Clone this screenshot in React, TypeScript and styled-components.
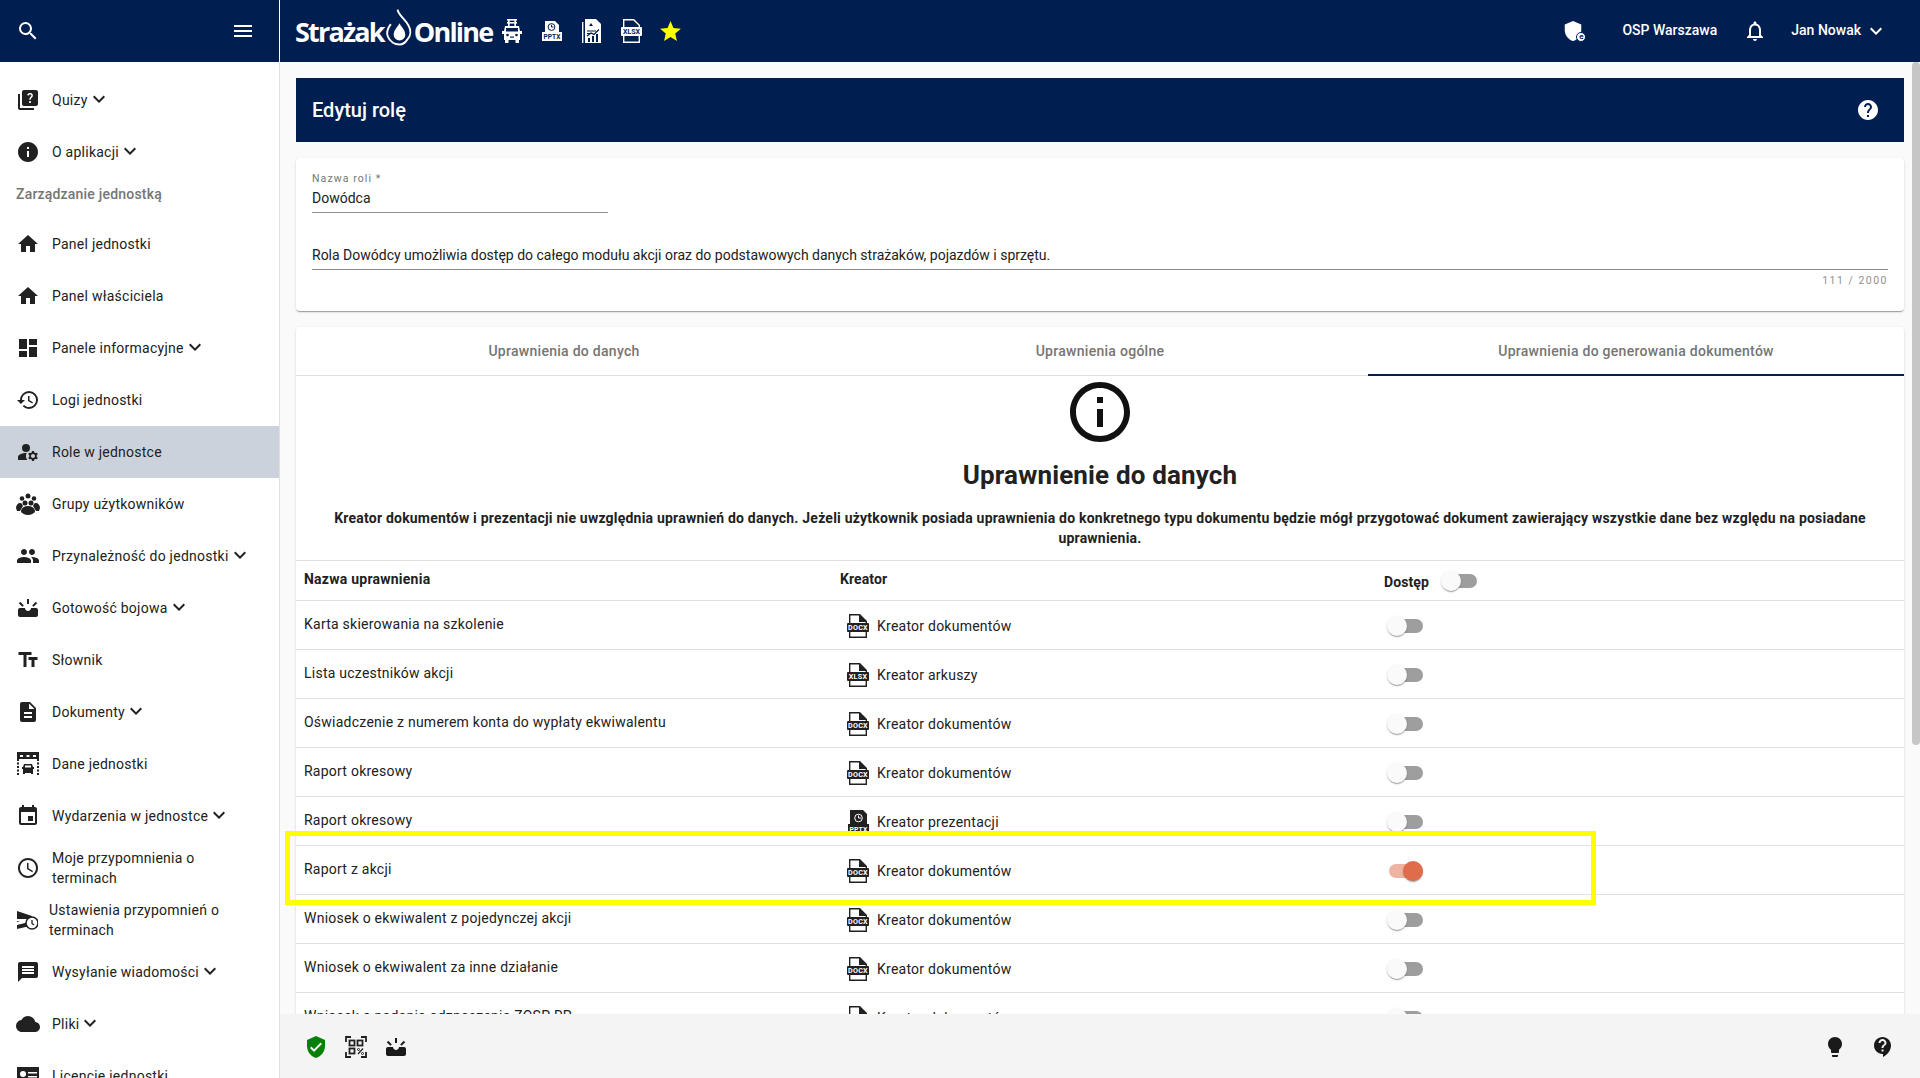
import React from 'react';
import styled, { createGlobalStyle } from 'styled-components';
import {
  MdSearch, MdMenu, MdQuiz, MdInfo, MdInfoOutline, MdHome, MdDashboard, MdHistory, MdManageAccounts,
  MdPeople, MdUpcoming, MdTextFields, MdDescription, MdEvent, MdAccessTime, MdMessage, MdCloud,
  MdKeyboardArrowDown, MdExpandMore, MdHelp, MdContactSupport, MdNotificationsNone, MdStar, MdVerifiedUser,
  MdLightbulb, MdShield,
} from 'react-icons/md';

const NAVY = '#001e50';

const GlobalStyle = createGlobalStyle`
  html, body { margin: 0; padding: 0; height: 100%; overflow: hidden; }
  body { font-family: Roboto, "Liberation Sans", sans-serif; font-size: 14px; color: #212121; background: #fafafa; }
  * { box-sizing: border-box; }
`;

const Page = styled.div`
  display: flex;
  flex-direction: column;
  height: 100vh;
  overflow: hidden;
`;

const TopBar = styled.header`
  flex: 0 0 62px;
  display: flex;
  align-items: center;
  background: ${NAVY};
  color: #fff;
`;

const TopLeft = styled.div`
  flex: 0 0 280px;
  height: 100%;
  display: flex;
  align-items: center;
  justify-content: space-between;
  padding: 0 24px 0 16px;
  border-right: 1px solid #fff;
`;

const Logo = styled.div`
  display: flex;
  align-items: center;
  margin-left: 15px;
  font-family: "Open Sans", sans-serif;
  font-weight: 700;
  font-size: 27px;
  letter-spacing: -1.8px;
  height: 100%;
`;

const TopIcons = styled.div`
  display: flex;
  align-items: center;
  margin-left: 10px;
  gap: 20px;
`;

const Star = styled(MdStar)`
  margin-left: -4px;
`;

const TopRight = styled.div`
  margin-left: auto;
  display: flex;
  align-items: center;
  height: 100%;
  padding-right: 32px;
`;

const ShieldBox = styled.span`
  position: relative;
  display: flex;
  margin-right: 38px;
`;

const ShieldBadge = styled.span`
  position: absolute;
  right: -2px;
  bottom: 0;
  width: 10px;
  height: 10px;
  border-radius: 50%;
  background: #fff;
  border: 1px solid ${NAVY};
  color: ${NAVY};
  font-size: 8px;
  font-weight: 700;
  line-height: 7px;
  text-align: center;
`;

const TopText = styled.span<{ $gap?: number; $lead?: number }>`
  font-weight: 500;
  font-size: 14px;
  margin-top: -2px;
  margin-left: ${(p) => p.$lead ?? 0}px;
  margin-right: ${(p) => p.$gap ?? 0}px;
`;

const Body = styled.div`
  flex: 1;
  min-height: 0;
  display: flex;
`;

const Sidebar = styled.nav`
  flex: 0 0 280px;
  overflow: hidden;
  padding-top: 12px;
  background: #fff;
  border-right: 1px solid #e0e0e0;
`;

const NavItem = styled.div<{ $active?: boolean }>`
  height: 52px;
  display: flex;
  align-items: center;
  padding: 0 16px;
  background: ${(p) => (p.$active ? '#ccd2dc' : 'transparent')};
  color: #212121;
  line-height: 20px;
  svg { flex: none; }
`;

const NavLabel = styled.span<{ $tight?: boolean }>`
  margin-left: ${(p) => (p.$tight ? 11 : 12)}px;
  max-width: 190px;
  letter-spacing: 0.25px;
`;

const Chevron = styled(MdExpandMore)`
  margin-left: -1px;
  margin-top: -3px;
`;

const NavSection = styled.div`
  height: 40px;
  padding: 6px 16px 0;
  line-height: 20px;
  font-weight: 500;
  color: #757575;
  letter-spacing: 0.2px;
`;

const Main = styled.main`
  flex: 1;
  min-width: 0;
  display: flex;
  flex-direction: column;
`;

const ScrollArea = styled.div`
  position: relative;
  flex: 1;
  min-height: 0;
`;

const Scroller = styled.div`
  height: 100%;
  overflow: hidden;
  padding: 16px;
`;

const ScrollTrack = styled.div`
  position: absolute;
  top: 0;
  right: 0;
  bottom: 0;
  width: 8px;
  background: #fafafa;
`;

const ScrollThumb = styled.div`
  height: 683px;
  border-radius: 4px;
  background: #c6c6c6;
`;

const TitleBar = styled.div`
  height: 64px;
  display: flex;
  align-items: center;
  justify-content: space-between;
  padding: 0 24px 0 16px;
  background: ${NAVY};
  color: #fff;
  font-size: 20px;
  font-weight: 500;
`;

const Card = styled.section`
  margin-top: 16px;
  background: #fff;
  border-radius: 4px;
  box-shadow: 0 2px 1px -1px rgba(0,0,0,.2), 0 1px 1px rgba(0,0,0,.14), 0 1px 3px rgba(0,0,0,.12);
`;

const FormCard = styled(Card)`
  height: 153px;
  padding: 15px 16px 0;
`;

const SmallLabel = styled.div`
  font-size: 10.5px;
  line-height: 12px;
  letter-spacing: 1.1px;
  color: #757575;
`;

const NameField = styled.div`
  width: 296px;
  height: 28px;
  padding-top: 3px;
  line-height: 20px;
  border-bottom: 1px solid #8c8c8c;
`;

const DescField = styled.div`
  margin-top: 27px;
  height: 30px;
  padding-top: 5px;
  line-height: 20px;
  border-bottom: 1px solid #8c8c8c;
`;

const Counter = styled.div`
  margin-top: 4px;
  text-align: right;
  font-size: 10.5px;
  line-height: 13px;
  letter-spacing: 1.5px;
  color: #8f8f8f;
`;

const TabsCard = styled(Card)`
  min-height: 1000px;
`;

const TabRow = styled.div`
  display: flex;
  height: 49px;
  border-bottom: 1px solid #e0e0e0;
`;

const Tab = styled.div<{ $active?: boolean }>`
  flex: 1;
  display: flex;
  align-items: center;
  justify-content: center;
  font-weight: 500;
  color: #757575;
  letter-spacing: 0.28px;
  margin-bottom: -1px;
  border-bottom: 2px solid ${(p) => (p.$active ? NAVY : 'transparent')};
`;

const Notice = styled.div`
  display: flex;
  flex-direction: column;
  align-items: center;
  padding: 0 16px 12px;
  text-align: center;
`;

const NoticeTitle = styled.h2`
  margin: 11px 0 0;
  font-size: 26px;
  line-height: 32px;
  font-weight: 700;
  letter-spacing: 0.15px;
  color: #212121;
`;

const NoticeText = styled.p`
  margin: 17px 0 0;
  line-height: 20px;
  font-weight: 700;
  letter-spacing: 0.21px;
`;

const TableRow = styled.div<{ $head?: boolean }>`
  position: relative;
  display: grid;
  grid-template-columns: 536px 544px 1fr;
  align-items: center;
  height: ${(p) => (p.$head ? 41 : 49)}px;
  padding-left: 8px;
  border-top: ${(p) => (p.$head ? '1px solid #e0e0e0' : 'none')};
  border-bottom: 1px solid #e0e0e0;
  font-weight: ${(p) => (p.$head ? 700 : 400)};
`;

const NameCell = styled.div`
  letter-spacing: 0.24px;
  margin-top: -3px;
`;

const CreatorCell = styled.div`
  display: flex;
  align-items: center;
  letter-spacing: 0.24px;
  padding-left: 6px;
  padding-top: 1px;
`;

const CreatorHead = styled.div`
  letter-spacing: 0.1px;
  margin-top: -3px;
`;

const CreatorText = styled.span`
  margin-left: 7px;
`;

const AccessCell = styled.div`
  display: flex;
  align-items: center;
  padding: 1px 0 0 3px;
`;

const AccessHead = styled.div`
  display: flex;
  align-items: center;
  gap: 12px;
  letter-spacing: 0.1px;
`;

const AccessLabel = styled.span`
  margin-top: 3px;
`;

const SwitchBox = styled.span<{ $on?: boolean }>`
  position: relative;
  display: inline-block;
  width: 36px;
  height: 20px;
  flex: none;
  &::before {
    content: '';
    position: absolute;
    left: 2px;
    right: 0;
    top: 3px;
    height: 14px;
    border-radius: 7px;
    background: ${(p) => (p.$on ? '#efb3a1' : '#9e9e9e')};
  }
  &::after {
    content: '';
    position: absolute;
    top: 0;
    left: ${(p) => (p.$on ? 16 : 0)}px;
    width: 20px;
    height: 20px;
    border-radius: 50%;
    background: ${(p) => (p.$on ? '#df6d4b' : '#fafafa')};
    box-shadow: 0 2px 1px -1px rgba(0,0,0,.2), 0 1px 1px rgba(0,0,0,.14), 0 1px 3px rgba(0,0,0,.12);
  }
`;

const Highlight = styled.div`
  position: absolute;
  left: -11px;
  top: -15px;
  width: 1311px;
  height: 74px;
  border: 5px solid #ffff00;
  pointer-events: none;
`;

const Footer = styled.footer`
  flex: 0 0 64px;
  display: flex;
  align-items: center;
  justify-content: space-between;
  padding: 1px 25px 0 24px;
  background: #f4f4f4;
  color: #1a1a1a;
`;

const FooterGroup = styled.div<{ $gap: number }>`
  display: flex;
  align-items: center;
  gap: ${(p) => p.$gap}px;
`;

const TruckIcon = () => (
  <svg width="20" height="24" viewBox="0 0 20 24" fill="#fff">
    <rect x="5" y="0" width="10" height="1.6" />
    <rect x="5" y="3" width="10" height="1.6" />
    <rect x="6" y="0" width="1.6" height="7" />
    <rect x="12.4" y="0" width="1.6" height="7" />
    <path d="M3 7h14l1 5h2v3h-2v6H2v-6H0v-3h2z" />
    <rect x="4" y="9" width="12" height="3.5" fill={NAVY} />
    <circle cx="5.5" cy="16" r="1.3" fill={NAVY} />
    <circle cx="14.5" cy="16" r="1.3" fill={NAVY} />
    <rect x="8" y="17.5" width="4" height="1.2" fill={NAVY} />
    <rect x="3" y="21" width="3.5" height="3" />
    <rect x="13.5" y="21" width="3.5" height="3" />
  </svg>
);

const PptxIcon = () => (
  <svg width="20" height="20" viewBox="0 0 20 20">
    <path d="M3 0h10l4 4v8H3z" fill="#fff" />
    <circle cx="9.5" cy="6" r="3.4" fill="none" stroke={NAVY} strokeWidth="1" />
    <path d="M9.5 3.8V6h2" fill="none" stroke={NAVY} strokeWidth="1" />
    <rect x="0" y="11" width="20" height="9" fill="#fff" />
    <text x="10" y="18" fontSize="6.6" fontWeight="700" fontFamily="Roboto, sans-serif" textAnchor="middle" fill={NAVY}>PPTX</text>
  </svg>
);

const ReportIcon = () => (
  <svg width="19" height="24" viewBox="0 0 19 24">
    <path d="M3 0h11l5 5v19H3z" fill="#fff" />
    <rect x="0" y="3" width="1.4" height="21" fill="#fff" />
    <path d="M5 12h9M5 14.500h6" stroke={NAVY} strokeWidth="1" />
    <path d="M5 17l4-3 3 1.500 5-5" fill="none" stroke={NAVY} strokeWidth="1.200" />
    <rect x="6" y="19" width="2" height="4" fill={NAVY} />
    <rect x="10" y="17" width="2" height="6" fill={NAVY} />
    <rect x="14" y="15" width="2" height="8" fill={NAVY} />
    <path d="M7 7l2-3 2 3z" fill={NAVY} />
  </svg>
);

const TopXlsxIcon = () => (
  <svg width="21" height="24" viewBox="0 0 21 24">
    <path d="M2.700 .7h10l5.600 5.600V23.300H2.700z" fill="none" stroke="#fff" strokeWidth="1.400" />
    <rect x="0" y="8" width="21" height="9" rx="1" fill="#fff" />
    <text x="10.500" y="15" fontSize="7" fontWeight="700" fontFamily="Roboto, sans-serif" textAnchor="middle" fill={NAVY}>XLSX</text>
  </svg>
);

const FlameSvg = styled.svg`
  margin: -8px -1px 0 0;
`;

const Flame = () => (
  <FlameSvg width="31" height="38" viewBox="0 0 32 38" fill="none">
    <path d="M14 1c1 6 8 10 11 16 3 5 3 11-1 15-2 3-5 5-8 5-5 0-10-3-12-8-2-5 0-9 3-13" stroke="#fff" strokeWidth="2" />
    <path d="M16 15c2 4 6 7 6 12a6 6 0 0 1-12 0c0-5 4-8 6-12z" fill="#fff" />
  </FlameSvg>
);

const FileIcon = ({ label }: { label: string }) => (
  <svg width="24" height="24" viewBox="0 0 24 24">
    <path d="M3.700 .7h10l6.600 6.600v16H3.700z" fill="#fff" stroke="#212121" strokeWidth="1.400" />
    <path d="M13 0l8 8h-8z" fill="#212121" />
    <rect x="1" y="9" width="22" height="9" rx="1" fill="#212121" />
    <text x="12" y="16" fontSize="7.200" fontWeight="700" fontFamily="Roboto, sans-serif" textAnchor="middle" fill="#fff">{label}</text>
  </svg>
);

const PptxFileIcon = () => (
  <svg width="24" height="24" viewBox="0 0 24 24">
    <path d="M4 0h13l4 4v11H4z" fill="#212121" />
    <circle cx="12.500" cy="8" r="3.800" fill="none" stroke="#fff" strokeWidth="1" />
    <path d="M12.500 5.500V8h2.500" fill="none" stroke="#fff" strokeWidth="1" />
    <rect x="2" y="14" width="21" height="10" fill="#212121" />
    <text x="12.500" y="21.500" fontSize="6.800" fontWeight="700" fontFamily="Roboto, sans-serif" textAnchor="middle" fill="#fff">PPTX</text>
  </svg>
);

const GroupsIcon = () => (
  <svg width="24" height="24" viewBox="0 0 24 24" fill="#212121">
    <circle cx="12" cy="4" r="2.500" />
    <circle cx="6" cy="6.500" r="2.300" />
    <circle cx="18" cy="6.500" r="2.300" />
    <circle cx="9" cy="11" r="2.500" />
    <circle cx="15" cy="11" r="2.500" />
    <path d="M0 16c0-3 2-5 4-5s2 1 3 3l-3 5H1zM24 16c0-3-2-5-4-5s-2 1-3 3l3 5h3z" />
    <path d="M5 20c0-4 3-6 7-6s7 2 7 6c-2 2-4 3-7 3s-5-1-7-3z" />
  </svg>
);

const GarageIcon = () => (
  <svg width="24" height="24" viewBox="0 0 24 24" fill="#212121">
    <rect x="1" y="0" width="22" height="7" />
    <rect x="4" y="3" width="3" height="2" fill="#fff" />
    <rect x="10.500" y="3" width="3" height="2" fill="#fff" />
    <rect x="17" y="3" width="3" height="2" fill="#fff" />
    <path d="M2 7v17M22 7v17" stroke="#212121" strokeWidth="2" strokeDasharray="2 1.500" />
    <path d="M8 12h8l1 3h1v2h-1v5h-2v-1H9v1H7v-5H6v-2h1z" />
    <rect x="9" y="13.500" width="6" height="2" fill="#fff" />
  </svg>
);

const AlarmClockIcon = () => (
  <svg width="22" height="24" viewBox="0 0 22 24" fill="#212121">
    <path d="M1 4l15 5-1 3H1v2h3l-3 1v3l12-3 1 4-13 3z" transform="translate(0 -1)" />
    <circle cx="16" cy="15" r="6" fill="#fff" stroke="#212121" strokeWidth="1.600" />
    <path d="M16 12v3.500l2 1.500" fill="none" stroke="#212121" strokeWidth="1.300" />
  </svg>
);

const LicenceIcon = () => (
  <svg width="24" height="24" viewBox="0 0 24 24" fill="#212121">
    <rect x="1" y="3" width="22" height="16" />
    <circle cx="7" cy="10" r="3" fill="#fff" />
    <rect x="12" y="8" width="9" height="1.500" fill="#fff" />
    <rect x="12" y="12" width="9" height="1.500" fill="#fff" />
  </svg>
);

const QrIcon = () => (
  <svg width="24" height="24" viewBox="0 0 24 24" fill="none" stroke="#212121" strokeWidth="1.800">
    <path d="M2 7V2h5M17 2h5v5M2 17v5h5M22 17v5h-5" />
    <rect x="5.500" y="5.500" width="5" height="5" />
    <rect x="13.500" y="5.500" width="5" height="5" />
    <rect x="5.500" y="13.500" width="5" height="5" />
    <path d="M14 19l5-5.500" strokeWidth="1.200" />
    <circle cx="14.500" cy="14.500" r="1" strokeWidth="1" />
    <circle cx="18.500" cy="18.500" r="1" strokeWidth="1" />
  </svg>
);

type NavEntry = {
  label?: string;
  icon?: React.ReactNode;
  more?: boolean;
  active?: boolean;
  tight?: boolean;
  section?: boolean;
};

const navItems: NavEntry[] = [
  { label: 'Quizy', icon: <MdQuiz size={24} />, more: true },
  { label: 'O aplikacji', icon: <MdInfo size={24} />, more: true },
  { label: 'Zarządzanie jednostką', section: true },
  { label: 'Panel jednostki', icon: <MdHome size={24} /> },
  { label: 'Panel właściciela', icon: <MdHome size={24} /> },
  { label: 'Panele informacyjne', icon: <MdDashboard size={24} />, more: true },
  { label: 'Logi jednostki', icon: <MdHistory size={24} /> },
  { label: 'Role w jednostce', icon: <MdManageAccounts size={24} />, active: true },
  { label: 'Grupy użytkowników', icon: <GroupsIcon /> },
  { label: 'Przynależność do jednostki', icon: <MdPeople size={24} />, more: true },
  { label: 'Gotowość bojowa', icon: <MdUpcoming size={24} />, more: true },
  { label: 'Słownik', icon: <MdTextFields size={24} /> },
  { label: 'Dokumenty', icon: <MdDescription size={24} />, more: true },
  { label: 'Dane jednostki', icon: <GarageIcon /> },
  { label: 'Wydarzenia w jednostce', icon: <MdEvent size={24} />, more: true },
  { label: 'Moje przypomnienia o terminach', icon: <MdAccessTime size={24} /> },
  { label: 'Ustawienia przypomnień o terminach', icon: <AlarmClockIcon />, tight: true },
  { label: 'Wysyłanie wiadomości', icon: <MdMessage size={24} />, more: true },
  { label: 'Pliki', icon: <MdCloud size={24} />, more: true },
  { label: 'Licencje jednostki', icon: <LicenceIcon /> },
];

type Permission = { name: string; kind: 'DOCX' | 'XLSX' | 'PPTX'; on?: boolean };

const creators = { DOCX: 'Kreator dokumentów', XLSX: 'Kreator arkuszy', PPTX: 'Kreator prezentacji' };

const permissions: Permission[] = [
  { name: 'Karta skierowania na szkolenie', kind: 'DOCX' },
  { name: 'Lista uczestników akcji', kind: 'XLSX' },
  { name: 'Oświadczenie z numerem konta do wypłaty ekwiwalentu', kind: 'DOCX' },
  { name: 'Raport okresowy', kind: 'DOCX' },
  { name: 'Raport okresowy', kind: 'PPTX' },
  { name: 'Raport z akcji', kind: 'DOCX', on: true },
  { name: 'Wniosek o ekwiwalent z pojedynczej akcji', kind: 'DOCX' },
  { name: 'Wniosek o ekwiwalent za inne działanie', kind: 'DOCX' },
  { name: 'Wniosek o nadanie odznaczenia ZOSP RP', kind: 'DOCX' },
];

const App: React.FC = () => {
  return (
    <Page>
      <GlobalStyle />
      <TopBar>
        <TopLeft>
          <MdSearch size={24} />
          <MdMenu size={24} />
        </TopLeft>
        <Logo>
          <span>Strażak</span>
          <Flame />
          <span>Online</span>
        </Logo>
        <TopIcons>
          <TruckIcon />
          <PptxIcon />
          <ReportIcon />
          <TopXlsxIcon />
          <Star size={25} color="#ffff00" />
        </TopIcons>
        <TopRight>
          <ShieldBox>
            <MdShield size={22} />
            <ShieldBadge>e</ShieldBadge>
          </ShieldBox>
          <TopText $gap={26}>OSP Warszawa</TopText>
          <MdNotificationsNone size={24} />
          <TopText $lead={24} $gap={3}>Jan Nowak</TopText>
          <MdKeyboardArrowDown size={24} />
        </TopRight>
      </TopBar>
      <Body>
        <Sidebar>
          {navItems.map((item) =>
            item.section ? (
              <NavSection key={item.label}>{item.label}</NavSection>
            ) : (
              <NavItem key={item.label} $active={item.active}>
                {item.icon}
                <NavLabel $tight={item.tight}>{item.label}</NavLabel>
                {item.more && <Chevron size={24} />}
              </NavItem>
            ),
          )}
        </Sidebar>
        <Main>
          <ScrollArea>
            <Scroller>
              <TitleBar>
                Edytuj rolę
                <MdHelp size={24} />
              </TitleBar>
              <FormCard>
                <SmallLabel>Nazwa roli *</SmallLabel>
                <NameField>Dowódca</NameField>
                <DescField>
                  Rola Dowódcy umożliwia dostęp do całego modułu akcji oraz do podstawowych danych strażaków, pojazdów i sprzętu.
                </DescField>
                <Counter>111 / 2000</Counter>
              </FormCard>
              <TabsCard>
                <TabRow>
                  <Tab>Uprawnienia do danych</Tab>
                  <Tab>Uprawnienia ogólne</Tab>
                  <Tab $active>Uprawnienia do generowania dokumentów</Tab>
                </TabRow>
                <Notice>
                  <MdInfoOutline size={72} color="#111" />
                  <NoticeTitle>Uprawnienie do danych</NoticeTitle>
                  <NoticeText>
                    Kreator dokumentów i prezentacji nie uwzględnia uprawnień do danych. Jeżeli użytkownik posiada uprawnienia do konkretnego typu dokumentu będzie mógł przygotować dokument zawierający wszystkie dane bez względu na posiadane uprawnienia.
                  </NoticeText>
                </Notice>
                <TableRow $head>
                  <NameCell>Nazwa uprawnienia</NameCell>
                  <CreatorHead>Kreator</CreatorHead>
                  <AccessHead>
                    <AccessLabel>Dostęp</AccessLabel>
                    <SwitchBox />
                  </AccessHead>
                </TableRow>
                {permissions.map((row) => (
                  <TableRow key={row.name + row.kind}>
                    <NameCell>{row.name}</NameCell>
                    <CreatorCell>
                      {row.kind === 'PPTX' ? <PptxFileIcon /> : <FileIcon label={row.kind} />}
                      <CreatorText>{creators[row.kind]}</CreatorText>
                    </CreatorCell>
                    <AccessCell>
                      <SwitchBox $on={row.on} />
                    </AccessCell>
                    {row.on && <Highlight />}
                  </TableRow>
                ))}
              </TabsCard>
            </Scroller>
            <ScrollTrack>
              <ScrollThumb />
            </ScrollTrack>
          </ScrollArea>
          <Footer>
            <FooterGroup $gap={16}>
              <MdVerifiedUser size={24} color="#078007" />
              <QrIcon />
              <MdUpcoming size={24} color="#1a1a1a" />
            </FooterGroup>
            <FooterGroup $gap={24}>
              <MdLightbulb size={24} />
              <MdContactSupport size={24} />
            </FooterGroup>
          </Footer>
        </Main>
      </Body>
    </Page>
  );
};

export default App;
